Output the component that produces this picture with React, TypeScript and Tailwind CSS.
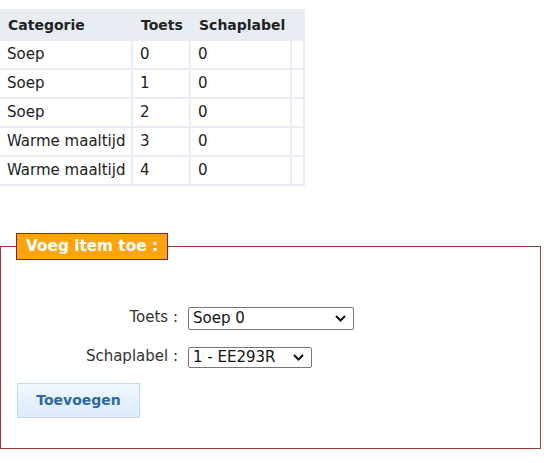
const ROWS = [
  { cat: 'Soep', toets: '0', label: '0' },
  { cat: 'Soep', toets: '1', label: '0' },
  { cat: 'Soep', toets: '2', label: '0' },
  { cat: 'Warme maaltijd', toets: '3', label: '0' },
  { cat: 'Warme maaltijd', toets: '4', label: '0' },
]

const font = { fontFamily: '"DejaVu Sans", Verdana, sans-serif' }

export default function App() {
  return (
    <div className="min-h-[463px] w-[544px] bg-white pt-[9px] text-[#222]" style={font}>
      {/* overzicht */}
      <table className="w-[305px] table-fixed border-separate border-spacing-0">
        <colgroup>
          <col className="w-[133px]" />
          <col className="w-[58px]" />
          <col className="w-[101px]" />
          <col className="w-[13px]" />
        </colgroup>
        <thead>
          <tr className="h-[32px] bg-[#e8edf4] text-left text-[14px] font-bold">
            <th className="pl-[8px]">Categorie</th>
            <th className="pl-[8px]">Toets</th>
            <th className="pl-[8px]">Schaplabel</th>
            <th />
          </tr>
        </thead>
        <tbody>
          {ROWS.map((row, i) => (
            <tr key={i} className="h-[29px] text-[15px]">
              <Cell>{row.cat}</Cell>
              <Cell>{row.toets}</Cell>
              <Cell>{row.label}</Cell>
              <Cell />
            </tr>
          ))}
        </tbody>
      </table>

      {/* formulier */}
      <fieldset className="mt-[47px] h-[216px] w-[541px] border border-[#a13a3a] px-[16px]">
        <legend className="-ml-[1px] border border-[#7d1f5a] bg-[#ffa40c] px-[9px] py-[2px] text-[15.3px] font-bold leading-[21px] text-white">
          Voeg item toe :
        </legend>

        <div className="mt-[47px] grid grid-cols-[161px_auto] items-center gap-x-[10px] gap-y-[17px] text-[15px] leading-[21px] text-[#333]">
          <span className="-mt-[3px] text-right">Toets :</span>
          <Select value="Soep 0" className="h-[23px] w-[166px]" />
          <span className="-mt-[3px] text-right">Schaplabel :</span>
          <Select value="1 - EE293R" className="h-[21px] w-[124px]" />
        </div>

        <button className="mt-[15px] h-[35px] w-[123px] border border-[#c4d8ee] bg-gradient-to-b from-[#f1f7fe] to-[#dcebfb] text-[14px] font-bold text-[#2c68a6]">
          Toevoegen
        </button>
      </fieldset>
    </div>
  )
}

function Cell({ children }: { children?: React.ReactNode }) {
  return (
    <td className="border-b-2 border-r-2 border-[#e8edf4] pl-[7px] align-middle whitespace-nowrap">
      {children}
    </td>
  )
}

function Select({ value, className }: { value: string; className: string }) {
  return (
    <div
      className={`flex ${className} items-center justify-between rounded-[2px] border border-[#767676] bg-white pl-[4px] pr-[7px] text-[15px] leading-[19px] text-[#111]`}
    >
      <span>{value}</span>
      <svg width="11" height="7" viewBox="0 0 11 7" fill="none">
        <path d="M1 1l4.5 4.5L10 1" stroke="#111" strokeWidth="2" />
      </svg>
    </div>
  )
}
